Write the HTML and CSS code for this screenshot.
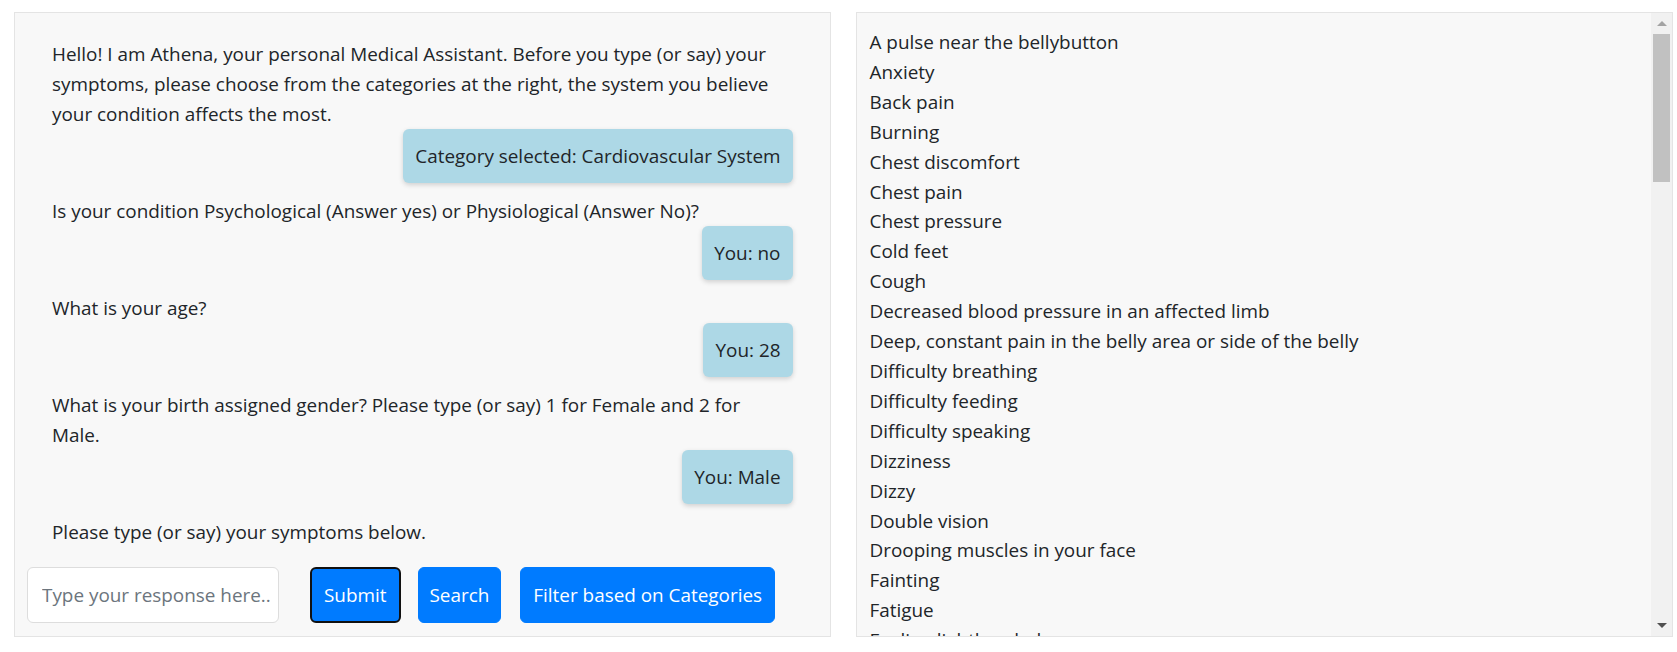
FILE: index.html
```html
<!DOCTYPE html>
<html lang="en">
<head>
<meta charset="utf-8">
<title>Athena – Medical Assistant</title>
<link rel="stylesheet" href="styles.css">
</head>
<body>
<div class="page">
  <section class="panel chat">
    <div class="messages">
      <p class="bot">Hello! I am Athena, your personal Medical Assistant. Before you type (or say) your symptoms, please choose from the categories at the right, the system you believe your condition affects the most.</p>
      <div class="user"><span class="bubble">Category selected: Cardiovascular System</span></div>
      <p class="bot">Is your condition Psychological (Answer yes) or Physiological (Answer No)?</p>
      <div class="user"><span class="bubble">You: no</span></div>
      <p class="bot">What is your age?</p>
      <div class="user"><span class="bubble">You: 28</span></div>
      <p class="bot">What is your birth assigned gender? Please type (or say) 1 for Female and 2 for Male.</p>
      <div class="user"><span class="bubble">You: Male</span></div>
      <p class="bot">Please type (or say) your symptoms below.</p>
    </div>
    <form class="composer">
      <input class="reply" type="text" placeholder="Type your response here..">
      <button class="btn btn-focus" type="button">Submit</button>
      <button class="btn btn-search" type="button">Search</button>
      <button class="btn" type="button">Filter based on Categories</button>
    </form>
  </section>
  <section class="panel symptoms">
    <ul class="symptom-list">
      <li>A pulse near the bellybutton</li>
      <li>Anxiety</li>
      <li>Back pain</li>
      <li>Burning</li>
      <li>Chest discomfort</li>
      <li>Chest pain</li>
      <li>Chest pressure</li>
      <li>Cold feet</li>
      <li>Cough</li>
      <li>Decreased blood pressure in an affected limb</li>
      <li>Deep, constant pain in the belly area or side of the belly</li>
      <li>Difficulty breathing</li>
      <li>Difficulty feeding</li>
      <li>Difficulty speaking</li>
      <li>Dizziness</li>
      <li>Dizzy</li>
      <li>Double vision</li>
      <li>Drooping muscles in your face</li>
      <li>Fainting</li>
      <li>Fatigue</li>
      <li>Feeling lightheaded</li>
    </ul>
    <div class="scrollbar" aria-hidden="true">
      <span class="sb-btn sb-up"></span>
      <span class="sb-track"><span class="sb-thumb"></span></span>
      <span class="sb-btn sb-down"></span>
    </div>
  </section>
</div>
</body>
</html>
```

FILE: styles.css
```css
html, body {
  margin: 0;
  height: 100%;
}

body {
  font-family: "Open Sans", "Noto Sans", "Liberation Sans", sans-serif;
  font-size: 18.9px;
  color: #212529;
  background: #ffffff;
}

.page {
  display: flex;
  gap: 25px;
  height: 652px;
  box-sizing: border-box;
  padding: 12px 4px 15px 14px;
}

.panel {
  flex: 1 1 0;
  min-width: 0;
  border: 1px solid #e4e4e4;
  background: #f8f8f8;
}

/* ---------- chat ---------- */
.chat {
  display: flex;
  flex-direction: column;
}

.messages {
  flex: 1 1 auto;
  overflow: hidden;
  padding: 25.5px 37px 0 37px;
}

.bot {
  margin: 0;
  max-width: 733px;
  line-height: 30px;
}

.user {
  display: flex;
  justify-content: flex-end;
  margin-bottom: 12.5px;
}

.bubble {
  display: block;
  background: #add8e6;
  line-height: 30px;
  padding: 12px 12.5px 12.5px;
  border-radius: 6px;
  box-shadow: 0 2px 5px rgba(0, 0, 0, 0.16);
}

.composer {
  display: flex;
  align-items: center;
  margin: 0;
  padding: 0 0 13px 12px;
}

.reply {
  width: 252px;
  height: 56px;
  box-sizing: border-box;
  margin: 0 31px 0 0;
  padding: 0 4px 0 14px;
  border: 1px solid #dddddd;
  border-radius: 6px;
  background: #ffffff;
  font: inherit;
  color: #495057;
}

.reply::placeholder {
  color: #6c757d;
}

.btn {
  height: 56px;
  box-sizing: border-box;
  margin: 0 19px 0 0;
  padding: 0 12px;
  border: 1px solid #007bff;
  border-radius: 6px;
  background: #007bff;
  color: #ffffff;
  font: inherit;
  line-height: 30px;
}

.btn-search {
  padding: 0 11px;
}

.btn-focus {
  border: 2px solid #111111;
  margin-right: 17px;
}

/* ---------- symptom list ---------- */
.symptoms {
  display: flex;
}

.symptom-list {
  flex: 1 1 auto;
  min-width: 0;
  overflow-y: auto;
  scrollbar-width: none;
  list-style: none;
  margin: 0;
  padding: 15px 0 15px 12.5px;
  line-height: 29.9px;
}

.scrollbar {
  flex: 0 0 21px;
  display: flex;
  flex-direction: column;
  background: #f1f1f1;
}

.sb-btn {
  flex: 0 0 21px;
  display: flex;
  align-items: center;
  justify-content: center;
}

.sb-btn::before {
  content: "";
  width: 0;
  height: 0;
  border-left: 5px solid transparent;
  border-right: 5px solid transparent;
}

.sb-up::before {
  border-bottom: 5px solid #a3a3a3;
}

.sb-down::before {
  border-top: 5px solid #505050;
}

.sb-track {
  flex: 1 1 auto;
  display: flex;
  flex-direction: column;
  padding: 0 2px;
}

.sb-thumb {
  height: 148px;
  background: #c1c1c1;
}
```
